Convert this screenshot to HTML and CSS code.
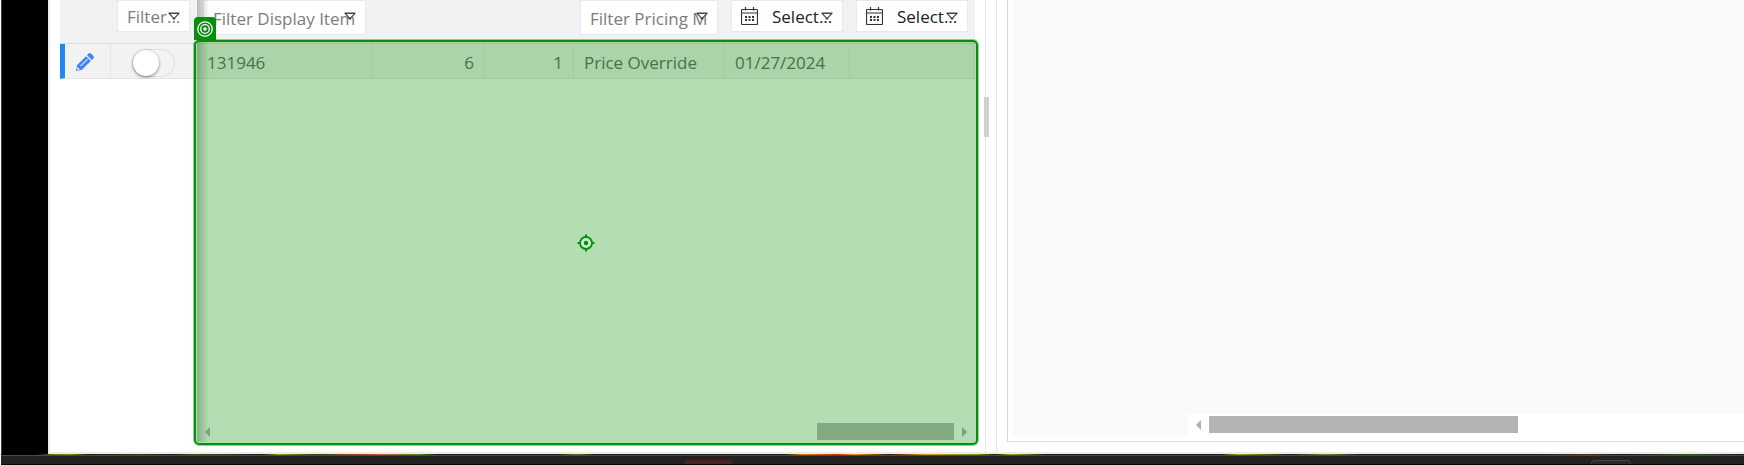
FILE: index.html
```html
<!DOCTYPE html>
<html lang="en">
<head>
<meta charset="utf-8">
<title>Pricing</title>
<link rel="stylesheet" href="styles.css">
</head>
<body>
<svg class="sprite" aria-hidden="true">
  <symbol id="funnel" viewBox="0 0 12 10"><path d="M.5 .5h11v1.200L7.300 6v1.500H4.700V6L.5 1.700z" fill="#444"/><path d="M2.400 2h7.200L6.500 5.300h-1z" fill="#fff"/></symbol>
  <symbol id="calendar" viewBox="0 0 17 18"><path d="M1.500 2.500h14q1 0 1 1v13q0 1-1 1h-14q-1 0-1-1v-13q0-1 1-1zM1 6h15M4.500 0v3.400M12.500 0v3.400" fill="none" stroke="#333" stroke-width="1.200"/><path d="M4 9h2v2H4zm3.500 0h2v2h-2zm3.500 0h2v2h-2zM4 12h2v2H4zm3.500 0h2v2h-2zm3.500 0h2v2h-2z" fill="#333"/></symbol>
</svg>
<div class="screen">
  <div class="desktop">
    <main class="window">
      <section class="pane grid-pane">
        <table class="grid">
          <colgroup><col class="c-edit"><col class="c-toggle"><col class="c-item"><col class="c-qty"><col class="c-min"><col class="c-method"><col class="c-date"><col></colgroup>
          <thead>
            <tr>
              <td></td>
              <td><div class="filter compact"><input type="text" placeholder="Filter..." aria-label="Filter status"><svg class="funnel"><use href="#funnel"/></svg></div></td>
              <td><div class="filter"><input type="text" placeholder="Filter Display Item" aria-label="Filter display item"><svg class="funnel"><use href="#funnel"/></svg></div></td>
              <td></td>
              <td></td>
              <td><div class="filter"><input type="text" placeholder="Filter Pricing Method" aria-label="Filter pricing method"><svg class="funnel"><use href="#funnel"/></svg></div></td>
              <td><div class="filter compact date"><svg class="calendar"><use href="#calendar"/></svg><input type="text" placeholder="Select..." aria-label="Start date"><svg class="funnel"><use href="#funnel"/></svg></div></td>
              <td><div class="filter compact date"><svg class="calendar"><use href="#calendar"/></svg><input type="text" placeholder="Select..." aria-label="End date"><svg class="funnel"><use href="#funnel"/></svg></div></td>
            </tr>
          </thead>
          <tbody>
            <tr>
              <td class="edit"><button type="button" aria-label="Edit row"><svg viewBox="0 0 18 18"><path d="M0 18l1.200-6L10 3.200 14.800 8 6 16.800z" fill="#3f83f8"/><path d="M11 2.200L12.600.6q1.200-1 2.400 0L17.400 3q1 1.200 0 2.400L15.800 7z" fill="#3f83f8"/><path d="M4.500 13.200l7-7" stroke="#d5e3fd" stroke-width="1.200"/><path d="M1.500 14l2.500 2.500-2.800.6z" fill="#f2f2f2"/></svg></button></td>
              <td class="toggle"><input type="checkbox" aria-label="Active"></td>
              <td>131946</td>
              <td class="num">6</td>
              <td class="num">1</td>
              <td>Price Override</td>
              <td>01/27/2024</td>
              <td></td>
            </tr>
          </tbody>
        </table>
        <div class="pin-shadow"></div>
        <div class="highlight">
          <span class="badge"><svg viewBox="0 0 16 16"><g fill="none" stroke="#fff" stroke-width="1.300"><circle cx="8" cy="8" r="7.200"/><circle cx="8" cy="8" r="4.300"/></g><circle cx="8" cy="8" r="1.800" fill="#fff"/></svg></span>
          <svg class="target" viewBox="0 0 18 18"><circle cx="9" cy="9" r="6" fill="#c9ecca" stroke="#068e0c" stroke-width="1.800"/><circle cx="9" cy="9" r="2.200" fill="#068e0c"/><path d="M9 .5V3M9 15v2.500M.5 9H3M15 9h2.500" stroke="#068e0c" stroke-width="2"/></svg>
          <div class="scrollbar">
            <svg class="arrow" viewBox="0 0 5 10"><path d="M5 0v10L0 5z"/></svg>
            <span class="thumb"></span>
            <svg class="arrow" viewBox="0 0 5 10"><path d="M0 0v10l5-5z"/></svg>
          </div>
        </div>
        <div class="splitter"></div>
      </section>
      <section class="pane side-pane">
        <div class="frame">
          <div class="canvas">
            <div class="side-scroll">
              <svg class="arrow" viewBox="0 0 5 10"><path d="M5 0v10L0 5z"/></svg>
              <span class="thumb"></span>
            </div>
          </div>
        </div>
      </section>
    </main>
  </div>
  <div class="wallpaper"></div>
  <footer class="taskbar"><span class="task red"></span><span class="task outline"></span></footer>
</div>
</body>
</html>
```
FILE: styles.css
```css
* { box-sizing: border-box; }
body {
  margin: 0;
  background: #fff;
  font: 17px/24px "Open Sans", "Noto Sans", sans-serif;
  color: #666;
}
.sprite { position: absolute; width: 0; height: 0; }
.screen {
  display: flex;
  flex-direction: column;
  height: 100vh;
  padding-left: 1px;
  overflow: hidden;
}
.desktop {
  flex: 1;
  display: flex;
  min-height: 0;
  padding-left: 46px;
  background: #000;
  border-left: 1px solid #444;
}
.window {
  flex: 1;
  display: flex;
  gap: 10px;
  min-width: 0;
  background: #fff;
  border-left: 2px solid #ececec;
  border-bottom: 2px solid #ececec;
}
.pane { position: relative; min-width: 0; }
.grid-pane {
  flex: 915 1 0;
  padding: 0 10px;
  border-right: 1px solid #e6e6e6;
}
.side-pane {
  flex: 737 1 0;
  display: flex;
  padding: 0 0 10px 10px;
  border-left: 1px solid #e6e6e6;
}

.grid { width: 100%; table-layout: fixed; border-collapse: separate; border-spacing: 0; }
.c-edit { width: 51px; }
.c-toggle { width: 86px; }
.c-item { width: 176px; }
.c-qty { width: 112px; }
.c-min { width: 89px; }
.c-method { width: 151px; }
.c-date { width: 125px; }
.grid thead td {
  height: 44px;
  padding: 0 7px 0 6px;
  vertical-align: top;
  background: #f1f2f4;
  border-bottom: 1px solid #dcdcdc;
}
.grid tbody td {
  height: 35px;
  padding: 4px 10px 0;
  background: #f2f2f2;
  border-right: 1px solid #e6e6e6;
  border-bottom: 1px solid #e2e2e2;
}
.grid .num { text-align: right; }
.grid tbody td.edit { padding: 2px 0 0 11px; border-left: 5px solid #1c8bf0; }
.grid tbody td.toggle { padding: 2px 0 0 21px; border-right: 0; }
.edit button { display: block; padding: 0; border: 0; background: none; }
.edit svg { display: block; width: 18px; height: 18px; }
.toggle input {
  appearance: none;
  display: flex;
  align-items: center;
  width: 43px;
  height: 28px;
  margin: 2px 0 0;
  border: 1px solid #dedede;
  border-radius: 14px;
  background: #f4f4f4;
}
.toggle input::before {
  content: "";
  width: 26px;
  height: 26px;
  border-radius: 50%;
  background: #fff;
  box-shadow: 0 1px 3px rgba(0, 0, 0, .5);
}

.filter {
  position: relative;
  display: flex;
  align-items: center;
  height: 35px;
  padding: 2px 9px 0;
  background: #fff;
  border: 1px solid #e8e8e8;
}
.filter.compact { height: 32px; padding-top: 0; }
.filter input {
  flex: 1;
  min-width: 0;
  height: 100%;
  padding: 0;
  border: 0;
  background: none;
  font: inherit;
  color: #222;
}
.filter input::placeholder { color: #7c7c7c; opacity: 1; }
.filter.date input::placeholder { color: #222; }
.date { gap: 14px; }
.calendar { flex: none; width: 17px; height: 18px; }
.funnel { position: absolute; right: 9px; top: 11px; width: 12px; height: 10px; }

.pin-shadow {
  position: absolute;
  left: 147px;
  top: 0;
  bottom: 10px;
  width: 12px;
  background: linear-gradient(90deg, rgba(0, 0, 0, .24), rgba(0, 0, 0, 0));
}
.highlight {
  position: absolute;
  left: 144px;
  right: 7px;
  top: 40px;
  bottom: 7px;
  display: flex;
  align-items: center;
  justify-content: center;
  background: rgba(6, 142, 8, .3);
  border: 2px solid #068e0c;
  border-radius: 5px;
  box-shadow: 0 0 0 1px rgba(6, 142, 12, .4);
}
.badge {
  position: absolute;
  left: -2px;
  top: -25px;
  display: flex;
  align-items: center;
  justify-content: center;
  width: 22px;
  height: 23px;
  background: #068e0c;
  border-radius: 4px 4px 0 0;
}
.badge svg { width: 16px; height: 16px; }
.target { width: 18px; height: 18px; }
.scrollbar {
  position: absolute;
  left: 9px;
  right: 9px;
  bottom: 3px;
  display: flex;
  align-items: center;
  height: 17px;
}
.arrow { width: 5px; height: 10px; }
.scrollbar .arrow { fill: #7aa07c; }
.scrollbar .thumb { width: 137px; height: 17px; margin: 0 8px 0 auto; background: #82a982; }
.splitter {
  position: absolute;
  right: -4px;
  top: 97px;
  width: 5px;
  height: 40px;
  background: #d0d0d0;
}

.frame {
  flex: 1;
  display: flex;
  padding: 0 0 6px 5px;
  border-left: 1px solid #d4d4d4;
  border-bottom: 1px solid #dcdcdc;
}
.canvas { flex: 1; display: flex; align-items: flex-end; padding-left: 175px; background: #fafafa; }
.side-scroll {
  flex: 1;
  display: flex;
  align-items: center;
  gap: 8px;
  height: 21px;
  padding-left: 8px;
  background: #fff;
}
.side-scroll .arrow { fill: #b0adae; }
.side-scroll .thumb { width: 309px; height: 17px; background: #b6b3b4; }

.wallpaper {
  height: 1px;
  background: linear-gradient(90deg, #000 2%, #5d7a10 3%, #7a8a10 4%, #15200c 5%, #26400c 8%, #1a1a12 10%, #3b5216 11%, #2c1610 15%, #86a01a 16%, #24440f 18%, #8a4018 20%, #b0653a 22%, #4e8a10 24%, #17200f 25%, #17220f 32%, #4f7c18 33%, #17220f 34%, #1c1e16 45%, #d88410 46%, #c42c10 48%, #e8a018 49%, #301808 51%, #d89a14 53%, #7c9a18 56%, #18200c 57%, #a8a818 58%, #15180e 60%, #15180e 70%, #a8a818 71%, #1a1a12 74%, #6a8a2c 76%, #1a1a18 78%, #181818 88%, #5a3010 91%, #161616 93%, #2c5a14 97%, #181818);
}
.taskbar {
  display: flex;
  align-items: flex-end;
  height: 10px;
  padding-left: 39%;
  background: #222;
  border-top: 1px solid #484848;
  border-bottom: 1px solid #050505;
}
.task { height: 4px; border-radius: 5px 5px 0 0; }
.task.red { width: 49px; margin-left: 3px; background: #4a2424; }
.task.outline { width: 40px; margin: 0 113px 0 auto; border: 1px solid #444; border-bottom: 0; background: #2a2a2a; }
```
